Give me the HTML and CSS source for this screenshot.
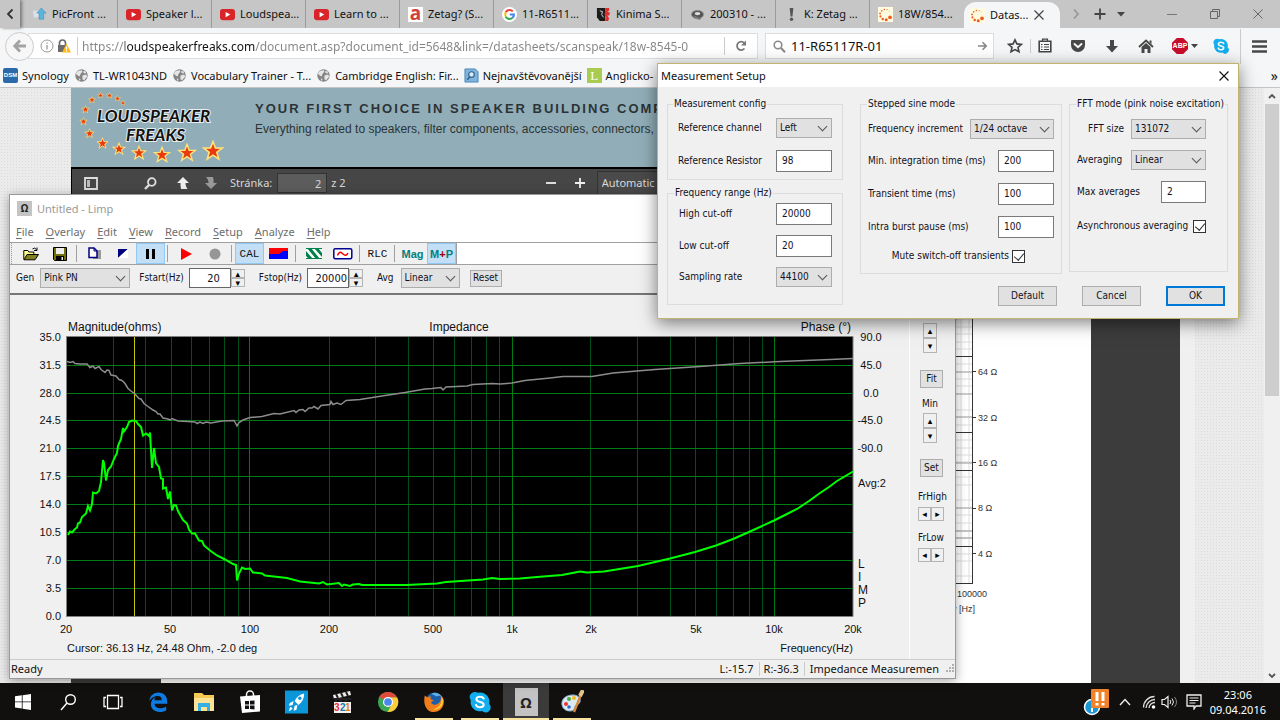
FILE: index.html
```html
<!DOCTYPE html>
<html lang="en">
<head>
<meta charset="utf-8">
<title>Desktop</title>
<link rel="stylesheet" href="styles.css">
</head>
<body>
<svg class="defs" aria-hidden="true">
  <symbol id="star" viewBox="-11 -11 22 22"><path d="M0-9.5 2.4-3.1 9.2-2.9 3.8 1.3 5.8 8 0 4.1-5.8 8-3.8 1.3-9.2-2.9-2.4-3.1Z" fill="#e83a0c" stroke="#ffe27a" stroke-width="1.6"/></symbol>
  <symbol id="yt" viewBox="0 0 16 16"><rect x="0" y="2" width="16" height="12" rx="3" fill="#d9252a"/><path d="M6 5.2v5.6L11 8Z" fill="#fff"/></symbol>
  <symbol id="globe" viewBox="0 0 16 16"><circle cx="8" cy="8" r="6.6" fill="#858585"/><path d="M3 4c2-2 4-1 5-2l1 2-2 2-1 3-2-1-2-2ZM9 8l4-1 1 2-3 4-2-1ZM10 3l3 1-1 2-2-1ZM5 11l2 1-1 2Z" fill="#e6e6e6"/></symbol>
  <symbol id="ring" viewBox="0 0 16 16"><g fill="#ec5a1c"><circle cx="12.8" cy="11" r="2"/><circle cx="8.8" cy="13.6" r="1.6"/><circle cx="5" cy="12.8" r="1.3"/><circle cx="2.6" cy="10" r="1.1"/><circle cx="2.2" cy="6.8" r="1"/><circle cx="4" cy="4" r=".9"/><circle cx="6.8" cy="2.6" r=".8"/><circle cx="9.8" cy="2.8" r=".7" opacity=".7"/><circle cx="12" cy="4.2" r=".6" opacity=".5"/></g></symbol>
  <symbol id="skype" viewBox="0 0 24 24"><path d="M6.500 1a5.500 5.500 0 0 1 3.300 1A10 10 0 0 1 22 14a5.500 5.500 0 0 1-7.800 7.900A10 10 0 0 1 2 10 5.500 5.500 0 0 1 6.500 1Z" fill="#12aeee"/><path d="M16 8.200C15.300 6.800 13.900 6.300 12 6.300c-2.300 0-3.900 1-3.900 2.700 0 3.900 7.900 1.900 7.900 5.700 0 1.900-1.700 3-4 3-2.200 0-3.800-.8-4.300-2.500" fill="none" stroke="#fff" stroke-width="2.300" stroke-linecap="round"/></symbol>
</svg>

<div class="desktop">
<main class="browser">
  <nav class="tabs" aria-label="Tabs">
    <button class="scroll" aria-label="Previous tabs"><svg width="8" height="12" viewBox="0 0 8 12"><path d="M6.500 1.500 2 6l4.500 4.500" fill="none" stroke="#333" stroke-width="1.800"/></svg></button>
    <button class="tab"><svg class="fav" viewBox="0 0 16 16"><path d="M1 4h7v7H2Z" fill="#d9e2e6"/><path d="M10 1l5 5.500h-2.500V13h-5V6.500H5Z" fill="#5cb3dc" stroke="#3d92bd" stroke-width=".6"/></svg><span>PicFront ...</span></button>
    <button class="tab"><svg class="fav"><use href="#yt"/></svg><span>Speaker l...</span></button>
    <button class="tab"><svg class="fav"><use href="#yt"/></svg><span>Loudspea...</span></button>
    <button class="tab"><svg class="fav"><use href="#yt"/></svg><span>Learn to ...</span></button>
    <button class="tab"><b class="fav azet">a</b><span>Zetag? (S...</span></button>
    <button class="tab"><svg class="fav" viewBox="0 0 16 16"><circle cx="8" cy="8" r="8" fill="#fff"/><g fill="none" stroke-width="2.200"><path d="M11.500 4.700A4.700 4.700 0 0 0 4 5.600" stroke="#ea4335"/><path d="M4 5.600a4.700 4.700 0 0 0 0 4.700" stroke="#fbbc05"/><path d="M4 10.300a4.700 4.700 0 0 0 7.300 1.200" stroke="#34a853"/><path d="M11.300 11.500A4.700 4.700 0 0 0 12.700 8H8.300" stroke="#4285f4"/></g></svg><span>11-R6511...</span></button>
    <button class="tab"><svg class="fav" viewBox="0 0 16 16"><path d="M1 1h9v14H4L1 11Z" fill="#1c1c1c"/><path d="M4 4l3 1-1 3 2 3" stroke="#ddd" fill="none"/><path d="M10 1h4v3l-2 1 3 1-1 3h-2l2 3-1 3h-3l1-4-2-3 1-4Z" fill="#e12c2c"/></svg><span>Kinima S...</span></button>
    <button class="tab"><svg class="fav" viewBox="0 0 16 16"><ellipse cx="8" cy="8" rx="6.500" ry="4.500" fill="#555" stroke="#999"/><ellipse cx="8" cy="7" rx="3" ry="1.800" fill="#ddd"/><path d="M4 10l7 3" stroke="#777" stroke-width="2"/></svg><span>200310 - ...</span></button>
    <button class="tab"><svg class="fav" viewBox="0 0 16 16"><path d="M6 1h4l-1 9H7Z" fill="#555"/><circle cx="8" cy="13" r="1.800" fill="#555"/></svg><span>K: Zetag ...</span></button>
    <button class="tab"><svg class="fav cream"><use href="#ring"/></svg><span>18W/854...</span></button>
    <button class="tab active"><svg class="fav cream"><use href="#ring"/></svg><span>Datas...</span><svg width="10" height="10" viewBox="0 0 10 10"><path d="M.5.5l9 9m0-9-9 9" stroke="#444" stroke-width="1.200"/></svg></button>
    <div class="tabtools">
      <button aria-label="Next tabs"><svg width="8" height="12" viewBox="0 0 8 12"><path d="M2 1.500 6 6l-4 4.500" fill="none" stroke="#999" stroke-width="1.800"/></svg></button>
      <button aria-label="New tab"><svg width="12" height="12" viewBox="0 0 12 12"><path d="M6 .5v11M.5 6h11" stroke="#444" stroke-width="1.800"/></svg></button>
      <button aria-label="List tabs"><svg width="8" height="5" viewBox="0 0 8 5"><path d="M0 0h8L4 4.500Z" fill="#444"/></svg></button>
    </div>
    <div class="wincontrols">
      <button aria-label="Minimize"><svg width="10" height="10" viewBox="0 0 10 10"><path d="M0 5.500h10" stroke="#777"/></svg></button>
      <button aria-label="Restore"><svg width="10" height="10" viewBox="0 0 10 10"><path d="M.5 2.500h7v7h-7ZM2.500 2V.5h7v7H8" fill="none" stroke="#666"/></svg></button>
      <button aria-label="Close"><svg width="10" height="10" viewBox="0 0 10 10"><path d="M.5.5l9 9m0-9-9 9" stroke="#666"/></svg></button>
    </div>
  </nav>

  <div class="navbar">
    <button class="back" aria-label="Back"><svg width="14" height="14" viewBox="0 0 14 14"><path d="M7 1.500 1.800 7 7 12.500M2 7h11" fill="none" stroke="#a3a3a3" stroke-width="2.800"/></svg></button>
    <div class="urlbox">
      <svg width="14" height="14" viewBox="0 0 14 14"><circle cx="7" cy="7" r="6" fill="none" stroke="#999"/><path d="M7 6v4.500M7 3.500v1.300" stroke="#999" stroke-width="1.300"/></svg>
      <svg width="14" height="14" viewBox="0 0 14 14"><path d="M2.500 6V4a3 3 0 0 1 6 0v2" fill="none" stroke="#6b6b6b" stroke-width="1.700"/><path d="M1 6h9v7H1Z" fill="#6b6b6b"/><path d="M9.500 4.500 14 13.500H5Z" fill="#fcb814"/><path d="M9.500 7.500v3M9.500 11.300v1.200" stroke="#fff" stroke-width="1.200"/></svg>
      <input class="url" aria-label="Address" value="https://loudspeakerfreaks.com/document.asp?document_id=5648&amp;link=/datasheets/scanspeak/18w-8545-0">
      <button class="reload" aria-label="Reload"><svg width="12" height="12" viewBox="0 0 12 12"><path d="M9.500 8.500A4.200 4.200 0 1 1 9.300 3" fill="none" stroke="#777" stroke-width="1.700"/><path d="M11 .5V5.500H6Z" fill="#777"/></svg></button>
    </div>
    <div class="searchbox">
      <svg width="13" height="13" viewBox="0 0 13 13"><circle cx="5" cy="5" r="3.800" fill="none" stroke="#8a8a8a" stroke-width="1.600"/><path d="M8 8l4 4.300" stroke="#8a8a8a" stroke-width="2"/></svg>
      <input aria-label="Search" value="11-R65117R-01">
      <svg width="10" height="10" viewBox="0 0 10 10"><path d="M0 5h8M4.500 1.200 8.300 5 4.500 8.800" fill="none" stroke="#888" stroke-width="1.600"/></svg>
    </div>
    <div class="navicons">
      <button aria-label="Bookmark"><svg width="16" height="16" viewBox="0 0 16 16"><path d="M8 1.800l1.900 4.100 4.500.5-3.400 3 1 4.400L8 11.600l-4 2.200 1-4.400-3.400-3 4.500-.5Z" fill="none" stroke="#444" stroke-width="1.600"/></svg></button>
      <button class="ruled" aria-label="Bookmarks list"><svg width="14" height="16" viewBox="0 0 14 16"><path d="M1.200 3.200h11.600v10.600H1.200Z" fill="none" stroke="#444" stroke-width="1.600"/><path d="M4.500 3V1.200h5V3M3 6.500h1.500M6 6.500h5M3 9h1.500M6 9h5M3 11.500h1.500M6 11.500h5" fill="none" stroke="#444" stroke-width="1.200"/></svg></button>
      <button aria-label="Pocket"><svg width="16" height="14" viewBox="0 0 16 14"><path d="M2 1h12a1 1 0 0 1 1 1v4a7 7 0 0 1-14 0V2a1 1 0 0 1 1-1Z" fill="#484848"/><path d="M4.500 5 8 8.300 11.500 5" fill="none" stroke="#f5f6f7" stroke-width="1.900" stroke-linecap="round"/></svg></button>
      <button aria-label="Downloads"><svg width="14" height="14" viewBox="0 0 14 14"><path d="M5 1h4v6h4l-6 6.500L1 7h4Z" fill="#484848"/></svg></button>
      <button aria-label="Home"><svg width="16" height="15" viewBox="0 0 16 15"><path d="M1 8 8 1.500 15 8" fill="none" stroke="#484848" stroke-width="1.800"/><path d="M3.500 8 8 4l4.500 4v6H9.500v-4h-3v4h-3ZM11.500 1.500h2V5l-2-1.800Z" fill="#484848"/></svg></button>
      <button class="abp" aria-label="Adblock Plus"><b>ABP</b><svg width="7" height="4" viewBox="0 0 7 4"><path d="M0 0h7L3.500 4Z" fill="#444"/></svg></button>
      <button aria-label="Skype"><svg width="16" height="16"><use href="#skype"/></svg></button>
      <button class="ruled menu" aria-label="Menu"><svg width="15" height="13" viewBox="0 0 15 13"><path d="M0 1.500h15M0 6.500h15M0 11.500h15" stroke="#484848" stroke-width="2.600"/></svg></button>
    </div>
  </div>

  <nav class="bookmarks" aria-label="Bookmarks">
    <a href="#"><b class="mark dsm">DSM</b>Synology</a>
    <a href="#"><svg class="mark"><use href="#globe"/></svg>TL-WR1043ND</a>
    <a href="#"><svg class="mark"><use href="#globe"/></svg>Vocabulary Trainer - T...</a>
    <a href="#"><svg class="mark"><use href="#globe"/></svg>Cambridge English: Fir...</a>
    <a href="#"><svg class="mark" viewBox="0 0 16 16"><path d="M1 1h11l3 3v11H1Z" fill="#7db4dc" stroke="#4a86b8"/><circle cx="8" cy="7" r="3" fill="#d8ecfa" stroke="#33618a" stroke-width="1.300"/><path d="M6 9.500 3.500 12.500" stroke="#33618a" stroke-width="1.600"/></svg>Nejnavštěvovanější</a>
    <a href="#"><b class="mark lmark">L</b>Anglicko-</a>
    <button class="more" aria-label="More bookmarks">»</button>
  </nav>

  <section class="viewport">
    <article class="site">
      <header class="banner">
        <svg class="logo" viewBox="71 87 164 79">
          <g><use href="#star" x="97" y="91" width="7" height="7"/><use href="#star" x="106" y="91" width="7" height="7"/><use href="#star" x="114" y="94" width="7" height="7"/><use href="#star" x="120" y="99" width="6" height="6"/><use href="#star" x="88" y="95" width="8" height="8"/><use href="#star" x="81" y="104" width="9" height="9"/><use href="#star" x="79" y="116" width="9" height="9"/><use href="#star" x="84" y="127" width="11" height="11"/><use href="#star" x="96" y="136" width="13" height="13"/><use href="#star" x="112" y="141" width="14" height="14"/><use href="#star" x="131" y="144" width="16" height="16"/><use href="#star" x="153" y="145" width="18" height="18"/><use href="#star" x="177" y="142" width="20" height="20"/><use href="#star" x="202" y="139" width="22" height="22"/></g>
          <g class="logotext"><text x="97" y="121">LOUDSPEAKER</text><text x="126" y="140">FREAKS</text></g>
        </svg>
        <div class="slogan"><h1>YOUR FIRST CHOICE IN SPEAKER BUILDING COMP</h1><p>Everything related to speakers, filter components, accessories, connectors, ele</p></div>
      </header>
      <div class="pdfbar">
        <button aria-label="Sidebar"><svg width="14" height="13" viewBox="0 0 14 13"><path d="M1 1h12v11H1Z" fill="none" stroke="#ddd" stroke-width="1.800"/><path d="M3 3h3v7H3Z" fill="#bbb"/></svg></button>
        <button class="find" aria-label="Find"><svg width="13" height="13" viewBox="0 0 13 13"><circle cx="7.800" cy="5" r="3.800" fill="none" stroke="#e0e0e0" stroke-width="1.800"/><path d="M5 8 1 12" stroke="#e0e0e0" stroke-width="2.400"/></svg></button>
        <button class="up" aria-label="Previous page"><svg width="14" height="14" viewBox="0 0 14 14"><path d="M7 1l6 6H9.500c0 3 1 4.500 2 6H5C4.500 11 4.500 9 4.500 7H1Z" fill="#eee"/></svg></button>
        <button class="down" aria-label="Next page"><svg width="14" height="14" viewBox="0 0 14 14"><path d="M7 13 1 7h3.500C4.500 4 3.500 2.500 2 1h7c.7 2 .7 4 .5 6H13Z" fill="#999"/></svg></button>
        <label for="pg">Stránka:</label><input id="pg" value="2"><span>z 2</span>
        <div class="zoomtools"><button aria-label="Zoom out"><svg width="10" height="10" viewBox="0 0 10 10"><path d="M0 5h10" stroke="#eee" stroke-width="1.800"/></svg></button><button aria-label="Zoom in"><svg width="10" height="10" viewBox="0 0 10 10"><path d="M0 5h10M5 0v10" stroke="#eee" stroke-width="1.800"/></svg></button><select aria-label="Zoom"><option>Automatic</option></select></div>
      </div>
      <div class="pdf">
        <svg class="sheet" viewBox="161 197 930 485">
          <path d="M940 318h33M940 326h33M940 333h33M940 341h33M940 348h33M940 363h33M940 378h33M940 385h33M940 409h33M940 424h33M940 439h33M940 447h33M940 454h33M940 461h33M940 476h33M940 484h33M940 499h33M940 514h33M940 522h33M940 530h33M940 537h33M940 553h33M940 560h33M940 575h33M961 318v264M969 318v264" stroke="#ddd" fill="none"/>
          <path d="M940 371h33M940 393h33M940 416h33M940 462h33M940 507h33M940 530h33M940 537h33" stroke="#999" fill="none"/>
          <path d="M940 355.500h33M940 431.500h33M940 469.500h33M940 545.500h33M940 582.500h33M972.500 318v265M973 370.500h3M973 416.500h3M973 461.500h3M973 507.500h3M973 552.500h3" stroke="#333" fill="none"/>
          <g class="sheettext"><text x="978" y="374">64 Ω</text><text x="978" y="420">32 Ω</text><text x="978" y="465">16 Ω</text><text x="978" y="510">8 Ω</text><text x="978" y="556">4 Ω</text><text x="957" y="596">100000</text><text x="975" y="611" text-anchor="end">y [Hz]</text></g>
        </svg>
      </div>
    </article>
    <div class="scrollbar"><svg width="8" height="16" viewBox="0 0 8 16"><path d="M1 10l3-3 3 3" fill="none" stroke="#555" stroke-width="1.800"/></svg><div class="thumb"></div><svg width="8" height="16" viewBox="0 0 8 16"><path d="M1 7l3 3 3-3" fill="none" stroke="#555" stroke-width="1.800"/></svg></div>
  </section>
</main>

<section class="limp" aria-label="Untitled - Limp">
  <header class="limptitle"><b>Ω</b>Untitled - Limp</header>
  <nav class="limpmenu"><button><u>F</u>ile</button><button><u>O</u>verlay</button><button><u>E</u>dit</button><button><u>V</u>iew</button><button><u>R</u>ecord</button><button><u>S</u>etup</button><button><u>A</u>nalyze</button><button><u>H</u>elp</button></nav>
  <div class="toolrow"><div class="tools">
    <i class="grip"></i>
    <button aria-label="Open"><svg width="16" height="14" viewBox="0 0 16 14"><path d="M.8 12.500V3.500h4l1 1.500h5v2.500" fill="#ffff8a" stroke="#000"/><path d="M1 12.800 4 7.500h11.500l-3.500 5.300Z" fill="#808020" stroke="#000"/><path d="M9.500 2q2-2 4 .5M14 .5v3h-3" fill="none" stroke="#000"/></svg></button>
    <button aria-label="Save"><svg width="14" height="14" viewBox="0 0 14 14"><path d="M.5.5h13v13h-12l-1-1Z" fill="#70700c" stroke="#000"/><path d="M3 1h8v6H3Z" fill="#eee"/><path d="M3 9h8v4.500H3Z" fill="#000"/><path d="M8.500 10h1.500v3H8.500Z" fill="#eee"/></svg></button>
    <i class="sep"></i>
    <button aria-label="Copy"><svg width="14" height="13" viewBox="0 0 14 13"><path d="M5 3h8v9H5Z" fill="#999"/><path d="M1 1h5l3 3v6.500H1Z" fill="#fff" stroke="#000080" stroke-width="1.500"/><path d="M6 1v3h3" fill="none" stroke="#000080"/></svg></button>
    <button class="narrow" aria-label="Colors"><svg width="10" height="9" viewBox="0 0 10 9"><path d="M0 0h10L0 9Z" fill="#000080"/><path d="M10 0v9H0Z" fill="#fff"/></svg></button>
    <button class="on" aria-label="Pause"><svg width="10" height="10" viewBox="0 0 10 10"><path d="M1.500 0v10M7.500 0v10" stroke="#000" stroke-width="3"/></svg></button>
    <i class="sep"></i>
    <button aria-label="Play"><svg width="12" height="12" viewBox="0 0 12 12"><path d="M1 0v12l11-6Z" fill="#f00"/></svg></button>
    <button aria-label="Stop"><svg width="12" height="12" viewBox="0 0 12 12"><circle cx="6" cy="6" r="5.500" fill="#969696"/></svg></button>
    <i class="sep"></i>
    <button class="on mono">CAL</button>
    <button aria-label="Overlay"><svg width="19" height="11" viewBox="0 0 19 11"><path d="M0 0h19v11H0Z" fill="#00f"/><path d="M0 0h19v3h-5l-4 3H0Z" fill="#f00"/></svg></button>
    <i class="sep"></i>
    <button aria-label="Stripes"><svg width="16" height="11" viewBox="0 0 16 11"><path d="M0 0h16v11H0Z" fill="#fff"/><path d="M1 0h4l9 11h-4ZM8 0h4l4 5v4ZM0 3l7 8H3L0 8Z" fill="#00804c"/><path d="M0 .5h16M0 10.500h16" stroke="#00804c"/></svg></button>
    <button aria-label="Sine"><svg width="20" height="12" viewBox="0 0 20 12"><rect x=".8" y=".8" width="18" height="10" rx="1.500" fill="#fff" stroke="#000090" stroke-width="1.500"/><path d="M4.500 7.500c2-5 4-3 5.500-1.500s3.500 2 5-1" fill="none" stroke="#f00" stroke-width="1.500"/></svg></button>
    <i class="sep"></i>
    <button class="mono">RLC</button>
    <i class="sep"></i>
    <button class="teal">Mag</button>
    <button class="on teal">M<em>+</em>P</button>
  </div></div>
  <div class="genrow">
    <label for="gen">Gen</label><span class="pick gen"><select id="gen"><option>Pink PN</option></select></span>
    <label for="fs">Fstart(Hz)</label><span class="num"><input id="fs" value="20"><span class="spin"><button aria-label="Up">▴</button><button aria-label="Down">▾</button></span></span>
    <label for="fe">Fstop(Hz)</label><span class="num full"><input id="fe" value="20000"><span class="spin"><button aria-label="Up">▴</button><button aria-label="Down">▾</button></span></span>
    <label for="av">Avg</label><span class="pick avg"><select id="av"><option>Linear</option></select></span>
    <button class="btn">Reset</button>
  </div>
  <div class="work">
    <svg class="chart" viewBox="10 295 899 364">
      <path d="M66.500 336.500h786.500v280H66.500Z" fill="#000" stroke="#808080"/>
      <path d="M113.500 337v279M145.500 337v279M171.500 337v279M191.500 337v279M209.500 337v279M224.500 337v279M238.500 337v279M329.500 337v279M375.500 337v279M408.500 337v279M433.500 337v279M454.500 337v279M471.500 337v279M486.500 337v279M499.500 337v279M590.500 337v279M637.500 337v279M670.500 337v279M695.500 337v279M716.500 337v279M733.500 337v279M749.500 337v279M762.500 337v279" stroke="#00501c" fill="none"/>
      <path d="M249.500 337v279M512.500 337v279M774.500 337v279M67 365.500h786M67 393.500h786M67 420.500h786M67 448.500h786M67 476.500h786M67 504.500h786M67 532.500h786M67 560.500h786M67 588.500h786" stroke="#007a12" fill="none"/>
      <path d="M134.500 337v279" stroke="#c8c800"/>
      <polyline class="phase" points="67,361.500 70,362.500 73,361.500 75,363.500 80,364 87,364 90,367.500 93,366 95,368.500 99,366.500 101,369.500 105,372.500 107,370 109,370.500 111,375 116,376 119,379.500 122,380.500 125,383.500 128,388.500 131,391 135,394 139,398.500 141,399 144,403.500 148,406.500 153,410 156,411.500 158,414 160,414 163,418 168,419 170,420 172,418.500 178,421 188,421.500 195,422 197,423.500 200,422 203,423.500 206,422 211,423 222,421 234,420.500 236,424 237,426 239,422.500 243,420 250,417.500 262,416.500 274,413.500 280,414 294,410.500 296,412.500 299,410 303,409.500 305,411.500 309,408 312,408 314,406.500 318,409 321,405.500 330,404.500 331,401.500 333,404.500 337,403 341,404.500 346,400.500 360,399.500 385,395.500 405,392.500 425,389 432,388.500 441,387.500 443,390 446,387 467,386 473,384.500 492,383.500 500,384 512,383 525,380.500 550,378 563,376.500 592,376.500 613,373 655,369.500 700,366.500 740,363.500 780,361.500 830,359.500 853,358.500"/>
      <polyline class="impedance" points="68,535 70,531.500 72,532.500 75,529 77,527.500 78,523.500 80,522.500 82,517 86,513.500 88,506 90,510.500 92,504 93,492.500 96,493.500 99,491 101,482 103,460 104,463 106,480.500 108,470 111,466.500 114,459 117,453 118,446 121,439 123,428 124,431.500 127,427 129,422 132,420.500 136,421 138,424 141,427 143,435.500 146,433.500 149,436 150,432.500 152,468 154,448 156,463 159,467 161,478.500 163,479 163,488.500 166,487.500 168,499 170,491.500 172,510.500 174,505 176,505.500 178,511 183,520 187,523.500 189,529.500 192,533.500 195,533.500 199,540.500 202,541 204,545.500 210,550.500 217,555.500 225,559.500 233,564 236,565 237,580.500 239,573.500 242,567.500 245,569 250,568.500 253,572.500 262,573.500 265,575.500 287,578 300,581.500 319,583.500 323,582 327,584.500 339,583 342,586 344,584.500 350,586 353,584.500 359,584 362,585 406,585 437,583.500 446,582 483,579.500 492,578 500,579 520,578.500 537,577 562,575 580,571.500 587,572.500 604,571.500 638,566 670,558.500 695,552 716,545.500 733,539 749,532 774,520.500 785,515 797,509 809,501 820,493 829,487 837,481 853,471.500"/>
      <g class="big"><text x="68" y="331">Magnitude(ohms)</text><text x="459" y="331" text-anchor="middle">Impedance</text><text x="851" y="331" text-anchor="end">Phase (°)</text></g>
      <g text-anchor="end"><text x="61" y="341">35.0</text><text x="61" y="369">31.5</text><text x="61" y="397">28.0</text><text x="61" y="424">24.5</text><text x="61" y="452">21.0</text><text x="61" y="480">17.5</text><text x="61" y="508">14.0</text><text x="61" y="536">10.5</text><text x="61" y="564">7.0</text><text x="61" y="592">3.5</text><text x="61" y="620">0.0</text></g>
      <g text-anchor="middle"><text x="66" y="633">20</text><text x="170" y="633">50</text><text x="250" y="633">100</text><text x="329" y="633">200</text><text x="433" y="633">500</text><text x="512" y="633">1k</text><text x="591" y="633">2k</text><text x="696" y="633">5k</text><text x="774" y="633">10k</text><text x="853" y="633">20k</text></g>
      <g text-anchor="middle"><text x="871" y="341">90.0</text><text x="871" y="369">45.0</text><text x="871" y="397">0.0</text><text x="870" y="424">-45.0</text><text x="870" y="452">-90.0</text></g>
      <text x="858" y="487">Avg:2</text>
      <g class="big"><text x="858" y="568">L</text><text x="858" y="581">I</text><text x="858" y="594">M</text><text x="858" y="607">P</text></g>
      <text x="67" y="652">Cursor: 36.13 Hz, 24.48 Ohm, -2.0 deg</text><text x="853" y="652" text-anchor="end">Frequency(Hz)</text>
    </svg>
    <aside class="side">
      <span class="spin v"><button aria-label="Top up">▴</button><button aria-label="Top down">▾</button></span>
      <button class="btn">Fit</button>
      <span class="cap">Min</span>
      <span class="spin v"><button aria-label="Min up">▴</button><button aria-label="Min down">▾</button></span>
      <button class="btn set">Set</button>
      <span class="cap fr">FrHigh</span>
      <span class="spin h"><button aria-label="FrHigh down">◂</button><button aria-label="FrHigh up">▸</button></span>
      <span class="cap fr">FrLow</span>
      <span class="spin h"><button aria-label="FrLow down">◂</button><button aria-label="FrLow up">▸</button></span>
    </aside>
  </div>
  <footer class="status"><span class="ready">Ready</span><span>L:-15.7</span><span>R:-36.3</span><span class="mode">Impedance Measuremen</span><svg width="10" height="10" viewBox="0 0 10 10"><path d="M7 1h2M7 4h2M7 7h2M4 4h2M4 7h2M1 7h2" stroke="#b0b0b0" stroke-width="2"/></svg></footer>
</section>

<form class="dialog" role="dialog" aria-label="Measurement Setup">
  <header><span>Measurement Setup</span><button type="button" aria-label="Close"><svg width="10" height="10" viewBox="0 0 10 10"><path d="M.5.5l9 9m0-9-9 9" stroke="#111" stroke-width="1.100"/></svg></button></header>
  <div class="cols">
    <div class="one">
      <fieldset class="config"><legend>Measurement config</legend>
        <div class="row"><label for="rc">Reference channel</label><span class="pick"><select id="rc"><option>Left</option></select></span></div>
        <div class="row"><label for="rr">Reference Resistor</label><input id="rr" value="98"></div>
      </fieldset>
      <fieldset class="range"><legend>Frequency range (Hz)</legend>
        <div class="row"><label for="hc">High cut-off</label><input id="hc" value="20000"></div>
        <div class="row"><label for="lc">Low cut-off</label><input id="lc" value="20"></div>
        <div class="row"><label for="sr">Sampling rate</label><span class="pick"><select id="sr"><option>44100</option></select></span></div>
      </fieldset>
    </div>
    <div class="rest">
      <div class="pair">
        <fieldset class="two"><legend>Stepped sine mode</legend>
          <div class="row"><label for="fi">Frequency increment</label><span class="pick"><select id="fi"><option>1/24 octave</option></select></span></div>
          <div class="row"><label for="mi">Min. integration time (ms)</label><input id="mi" value="200"></div>
          <div class="row"><label for="tt">Transient time (ms)</label><input id="tt" value="100"></div>
          <div class="row"><label for="ib">Intra burst pause (ms)</label><input id="ib" value="100"></div>
          <label class="check"><span>Mute switch-off transients</span><input type="checkbox" checked></label>
        </fieldset>
        <fieldset class="three"><legend>FFT mode (pink noise excitation)</legend>
          <div class="row"><label class="inset" for="ff">FFT size</label><span class="pick"><select id="ff"><option>131072</option></select></span></div>
          <div class="row"><label for="ag">Averaging</label><span class="pick"><select id="ag"><option>Linear</option></select></span></div>
          <div class="row"><label for="ma">Max averages</label><input id="ma" value="2"></div>
          <label class="check"><span>Asynchronous averaging</span><input type="checkbox" checked></label>
        </fieldset>
      </div>
      <footer><button type="button" class="btn">Default</button><button type="button" class="btn">Cancel</button><button type="button" class="btn ok">OK</button></footer>
    </div>
  </div>
</form>

<footer class="taskbar">
  <button class="sys" aria-label="Start"><svg width="16" height="16" viewBox="0 0 16 16"><path d="M0 2.300 6.800 1.300V7.500H0ZM7.600 1.200 16 0V7.500H7.600ZM0 8.300H6.800V14.600L0 13.600ZM7.600 8.300H16V16L7.600 14.800Z" fill="#fff"/></svg></button>
  <button class="sys" aria-label="Search"><svg width="18" height="18" viewBox="0 0 18 18"><circle cx="11.500" cy="6.500" r="4.800" fill="none" stroke="#fff" stroke-width="1.400"/><path d="M8 10 2 17" stroke="#fff" stroke-width="1.400"/></svg></button>
  <button class="sys" aria-label="Task view"><svg width="20" height="16" viewBox="0 0 20 16"><path d="M4.500 1.500h11v13h-11ZM3 3.500H1v9h2M17 3.500h2v9h-2" fill="none" stroke="#fff" stroke-width="1.300"/></svg></button>
  <button aria-label="Edge"><svg width="20" height="20" viewBox="0 0 24 24"><path d="M1.500 10.500C2.500 4 7 .5 12.500.5 19 .5 23 5 23 11v3H8c0 4 3.500 5.500 7 5.500 3 0 5-.8 6.800-1.800v4.500C20 23.200 17.500 24 14 24 7.500 24 3.500 20 3.500 14.500 3.500 10.500 6 7.500 9 6c-.9 1-1.200 2.500-1.300 4H16.500c0-3.500-1.500-5.300-4.700-5.300C8 4.700 4 6.500 1.500 10.500Z" fill="#0e7be2"/></svg></button>
  <button aria-label="Files"><svg width="22" height="20" viewBox="0 0 22 20"><path d="M1 1h8l2 2h10v16H1Z" fill="#f5ca54"/><path d="M1 6h20v13H1Z" fill="#fbe294"/><path d="M5 11h12v8h-3v-4H8v4H5Z" fill="#35aee4"/></svg></button>
  <button aria-label="Store"><svg width="20" height="24" viewBox="0 0 20 24"><path d="M6.500 8V4.500a3.500 3.500 0 0 1 7 0V8" fill="none" stroke="#fff" stroke-width="1.500"/><path d="M0 6.500 20 5v16.500L2 23Z" fill="#fff"/><path d="M5 11h4v3.500H5ZM10 10.800 14.500 10.500v4H10ZM5 15.500h4V19H5ZM10 15.500h4.500v4L10 19Z" fill="#111"/></svg></button>
  <button aria-label="Rocket"><svg width="23" height="24" viewBox="0 0 24 24"><path d="M0 0h24v24H0Z" fill="#0a96d8"/><path d="M20 3c-5 1-8 4-10 8l4 4c4-3 6-7 6-12ZM9 11l-4 2-1 3 4-1M13 15l-1 5-3 1 1-5M6 17l2 2-4 3 1-4Z" fill="#fff"/><circle cx="15.500" cy="8" r="1.800" fill="#0a96d8"/></svg></button>
  <button aria-label="Media player"><svg width="20" height="24" viewBox="0 0 20 24"><path d="M1 5 18 1l1 4L2 9Z" fill="#eee"/><path d="M4 4l2 4M9 3l2 4M14 2l2 4M2 9h17M5 9l-2 3M10 9l-2 3M15 9l-2 3" stroke="#222" stroke-width="2"/><path d="M2 12h17v11H2Z" fill="#f2f2f2"/><g font-family="Liberation Sans" font-weight="bold" font-size="10"><text x="2" y="21" fill="#d33">3</text><text x="8" y="21" fill="#27a">2</text><text x="13" y="21" fill="#d80">1</text></g></svg></button>
  <button aria-label="Chrome"><svg width="22" height="22" viewBox="0 0 24 24"><circle cx="12" cy="12" r="11" fill="#3aa757"/><path d="M12 12 2.500 6.500A11 11 0 0 1 21.500 6.500L22 7H12Z" fill="#e04a3a"/><path d="M12 7h10a11 11 0 0 1-10.500 16L16.500 14Z" fill="#fbcd38"/><circle cx="12" cy="12" r="5.500" fill="#fff"/><circle cx="12" cy="12" r="4.200" fill="#4a87ee"/></svg></button>
  <button class="run" aria-label="Firefox"><svg width="22" height="24" viewBox="0 0 24 24"><circle cx="12.500" cy="11" r="9.500" fill="#1c5fa8"/><path d="M9 3c4-2 9-1 11 3-2-1-4-1-5 0Z" fill="#5bb4e5"/><path d="M2 5l3 2c1-1 3-1 4-1-2 2 0 4 3 4l-3 2c0 3 4 4 7 2 4-2 4-7 3-10 4 3 5 9 2 14-4 6-13 7-17 1C1 15 1 9 2 5Z" fill="#ef7d1c"/><path d="M20 7c1 7-3 12-10 13 8 2 13-5 12-11Z" fill="#fbc83c"/></svg></button>
  <button class="run" aria-label="Skype"><svg width="22" height="24" viewBox="0 0 24 24"><use href="#skype"/></svg></button>
  <button class="run current" aria-label="Limp"><b class="omega">Ω</b></button>
  <button class="run" aria-label="Paint"><svg width="24" height="24" viewBox="0 0 24 24"><path d="M2 15C1 9 6 5 13 5c5 0 8 3 7 7-1 3-4 2-5 4s0 5-5 5c-4 0-7-2-8-6Z" fill="#dce8f2" stroke="#8fb0cc"/><circle cx="6" cy="14" r="2" fill="#e33"/><circle cx="9" cy="9" r="2" fill="#4a4"/><circle cx="14" cy="8" r="2" fill="#f5b820"/><circle cx="9" cy="17" r="1.800" fill="#36c"/><path d="M22 2 14 22" stroke="#d88a3c" stroke-width="2.400"/><path d="M23 0l-3 6" stroke="#e8c48c" stroke-width="4"/></svg></button>
  <div class="tray">
    <svg width="28" height="28" viewBox="0 0 28 28"><circle cx="9" cy="19" r="7.500" fill="#1b97d5" stroke="#fff" stroke-width="1.500"/><path d="M9 20v4" stroke="#fff" stroke-width="2"/><rect x="8" y="1" width="18" height="19" rx="1" fill="#f0832a"/><path d="M14 4v9M20 4v9M14 15v2.500M20 15v2.500" stroke="#fff" stroke-width="3"/></svg>
    <svg width="12" height="8" viewBox="0 0 12 8"><path d="M1 7l5-5.500L11 7" fill="none" stroke="#eee" stroke-width="1.400"/></svg>
    <svg class="wifi" width="14" height="14" viewBox="0 0 14 14"><path d="M1.500 12.500A11 11 0 0 1 12.500 1.500M4 13A9 9 0 0 1 13 4.500M7 13A6 6 0 0 1 13 7.500" fill="none" stroke="#ddd" stroke-width="1.300"/><circle cx="11.500" cy="12" r="1.800" fill="#fff"/></svg>
    <svg width="17" height="14" viewBox="0 0 17 14"><path d="M1 4.500h2.500L7 1.500v11L3.500 9.500H1Z" fill="none" stroke="#eee" stroke-width="1.200"/><path d="M9 5q1.500 2 0 4M11 3.500q3 3.500 0 7" fill="none" stroke="#eee"/><path d="M13.500 2q4 5 0 10" fill="none" stroke="#888"/></svg>
    <svg width="16" height="16" viewBox="0 0 16 16"><path d="M1 1h14v11h-5l-2 3v-3H1Z" fill="none" stroke="#eee" stroke-width="1.300"/><path d="M3.500 4h9M3.500 6.500h9M3.500 9h6" stroke="#eee" stroke-width="1.200"/></svg>
    <time>23:06<br>09.04.2016</time>
  </div>
</footer>
</div>
</body>
</html>
```
FILE: styles.css
```css
* { box-sizing: border-box; }
body { margin: 0; font: 11px/14px "Noto Sans", "Open Sans", sans-serif; color: #111; }
button, input, select { font: inherit; color: inherit; margin: 0; }
button { border: 0; padding: 0; background: none; display: flex; align-items: center; justify-content: center; }
input { border: 0; padding: 0; min-width: 0; outline: 0; background: none; }
svg { flex: none; display: block; }
.defs { position: absolute; width: 0; height: 0; }
.desktop { position: relative; min-height: 100vh; display: flex; flex-direction: column; overflow: hidden; }
.browser { flex: 1; display: flex; flex-direction: column; background: #f5f6f7; }

/* browser tabs */
.tabs { display: flex; height: 28px; background: #c6c6c6; align-items: stretch; }
.scroll { width: 20px; box-shadow: 2px 0 3px #777; margin-right: 4px; }
.tab { width: 94px; gap: 5px; padding-left: 8px; justify-content: flex-start; border-right: 1px solid #9a9a9a; white-space: nowrap; }
.tab:nth-last-of-type(2) { border-right: 0; }
.fav { width: 15px; height: 15px; }
.cream { background: #fffbe0; }
.azet { background: #fff; color: #d0413c; font: bold 19px/13px "Noto Sans", sans-serif; }
.tab.active { width: 96px; background: #f5f6f7; border: 0; border-radius: 12px 12px 0 0; margin-top: 2px; padding-left: 6px; }
.tab.active > svg:last-child { margin-left: 1px; }
.tabtools { display: flex; gap: 14px; margin-left: 12px; }
.tabtools button:last-child { margin-left: -3px; }
.wincontrols { display: flex; gap: 33px; margin-left: auto; padding-right: 17px; }

/* address row */
.navbar { display: flex; height: 36px; align-items: center; padding-left: 5px; }
.back { width: 29px; height: 29px; border: 1px solid #ccc; border-radius: 50%; background: #f7f7f7; z-index: 1; }
.urlbox { flex: 1; display: flex; align-items: center; gap: 3px; height: 26px; background: #fff; border: 1px solid #ddd; margin-left: -6px; padding-left: 11px; }
.url { flex: 1; height: 18px; margin-left: 3px; padding-left: 4px; border-left: 1px solid #ccc; font-size: 12px; color: transparent; background: linear-gradient(90deg, #858585 47px, #111 47px 177px, #858585 177px); -webkit-background-clip: text; background-clip: text; }
.reload { width: 33px; height: 18px; border-left: 1px solid #ccc; margin-left: 16px; }
.searchbox { width: 229px; height: 26px; display: flex; align-items: center; gap: 5px; margin-left: 7px; padding: 0 5px 0 7px; background: #fff; border: 1px solid #ddd; }
.searchbox input { flex: 1; font-size: 13px; line-height: 18px; }
.navicons { display: flex; gap: 18px; padding-left: 13px; align-items: center; }
.navicons button { min-width: 16px; }
.navicons .ruled { margin-left: -11px; padding-left: 7px; border-left: 1px solid #ccc; height: 14px; }
.navicons .abp { gap: 3px; margin-right: -3px; }
.abp b { width: 16px; height: 16px; clip-path: polygon(30% 0, 70% 0, 100% 30%, 100% 70%, 70% 100%, 30% 100%, 0 70%, 0 30%); background: #c70d2c; color: #fff; font: bold 7px/16px "Liberation Sans", sans-serif; }
.navicons .menu { height: 35px; margin-left: -7px; padding: 0 13px 0 11px; }

.bookmarks { display: flex; align-items: center; height: 23px; padding-left: 3px; gap: 5px; white-space: nowrap; }
.bookmarks a { display: flex; align-items: center; gap: 4px; color: #111; text-decoration: none; }
.mark { width: 15px; height: 15px; text-align: center; }
.dsm { background: #2c69a8; color: #fff; font: bold 6px/15px "Liberation Sans", sans-serif; border-radius: 2px; }
.lmark { background: #a9cc50; color: #fff; font: 13px/15px "Liberation Serif", serif; }
.more { margin-left: auto; padding-right: 2px; font-size: 14px; }

/* page */
.viewport { flex: 1; display: flex; border-top: 1px solid #c4c4c4; background: radial-gradient(#dcdcdc 30%, transparent 32%) 0 0/3px 3px #ebebeb; }
.site { flex: 1; margin: 0 84px 0 71px; display: flex; flex-direction: column; box-shadow: 15px 0 #f0f0f0; }
.banner { display: flex; height: 79px; background: #91aeb8; overflow: hidden; }
.logo { width: 164px; height: 79px; }
.logotext { font: italic bold 17px "Lato", sans-serif; fill: #111; stroke: #e8eef0; stroke-width: 2px; paint-order: stroke; }
.slogan { padding: 13px 0 0 20px; white-space: nowrap; font-family: "Liberation Sans", sans-serif; color: #2c3336; }
.slogan h1 { margin: 0; font-size: 13px; line-height: 16px; letter-spacing: 2px; }
.slogan p { margin: 4px 0 0; font-size: 12px; line-height: 16px; }
.pdfbar { height: 31px; display: flex; align-items: center; padding-left: 12px; border: 1px solid #000; border-top-width: 2px; background: #464646; color: #d8d8d8; }
.pdfbar .find { margin-left: 46px; }
.pdfbar .up { margin-left: 19px; }
.pdfbar .down { margin-left: 14px; }
.pdfbar label { margin-left: 12px; }
.pdfbar input { width: 50px; height: 20px; margin: 0 4px 0 5px; padding-right: 5px; border: 1px solid #333; background: #5c5c5c; text-align: right; }
.zoomtools { display: flex; gap: 19px; margin-left: 200px; align-items: center; }
.zoomtools select { width: 100px; height: 24px; margin-left: -7px; appearance: none; border: 1px solid #333; background: #4a4a4a; padding-left: 4px; }
.pdf { flex: 1; background: #3c3c3c; padding: 0 89px 0 90px; }
.sheet { width: 100%; background: #fff; }
.sheettext { font: 9px "Liberation Sans", sans-serif; fill: #333; }
.scrollbar { width: 16px; background: #f0f0f0; display: flex; flex-direction: column; align-items: center; }
.thumb { width: 14px; flex: 0 0 292px; background: #cdcdcd; margin-bottom: auto; }

/* shared window controls */
.btn { border: 1px solid #adadad; background: #e1e1e1; }
.pick { position: relative; display: flex; }
.pick::after { content: ""; position: absolute; right: 6px; top: 5px; width: 6px; height: 6px; border: solid #555; border-width: 0 1px 1px 0; transform: rotate(45deg); pointer-events: none; }
.pick select { appearance: none; width: 100%; height: 20px; padding: 0 3px; border: 1px solid #adadad; border-radius: 0; background: #e1e1e1; }
.spin { display: flex; flex-direction: column; }
.spin button { border: 1px solid #b4b4b4; background: #f0f0f0; font: 9px/8px "DejaVu Sans", sans-serif; color: #000; overflow: hidden; }

/* Limp window */
.limp { position: absolute; left: 9px; top: 194px; width: 947px; height: 485px; display: flex; flex-direction: column; background: #f0f0f0; border: 1px solid #999; box-shadow: 0 2px 10px rgba(0,0,0,.35); }
.limptitle { height: 27px; display: flex; align-items: center; gap: 5px; padding-left: 7px; background: #fff; color: #999; }
.limptitle b { width: 15px; height: 15px; background: #c4c4c4; color: #222; font-size: 10px; line-height: 14px; text-align: center; }
.limpmenu { display: flex; gap: 12px; height: 20px; padding-left: 6px; background: #fff; color: #6d6d6d; }
.limpmenu u { text-underline-offset: 2px; }
.toolrow { height: 23px; border-top: 1px solid #a0a0a0; border-bottom: 1px solid #a0a0a0; background: #fff; display: flex; }
.tools { display: flex; background: #f0f0f0; border-right: 1px solid #a0a0a0; }
.tools button { width: 29px; }
.tools .narrow { width: 27px; }
.tools .on { background: #c2dff5; border: 1px solid #90c8f6; }
.grip { width: 6px; border-left: 1px dotted #999; margin-left: 1px; margin-right: -1px; }
.sep { width: 1px; background: #a0a0a0; margin: 2px 3px 2px 2px; }
.mono { font: 11px/14px "Liberation Mono", monospace; }
.tools .teal { font: bold 11px/14px "Liberation Sans", sans-serif; color: #008080; }
.teal em { color: #900; font-style: normal; }
.genrow, .side, .dialog { font: 10px/14px "DejaVu Sans Condensed", "DejaVu Sans", sans-serif; color: #112; }
.genrow { height: 30px; display: flex; align-items: center; gap: 5px; padding: 0 0 2px 6px; border-bottom: 2px solid #777; }
.gen { width: 90px; margin: 0 4px 0 1px; }
.avg { width: 59px; margin: 0 5px 0 2px; }
.num { display: flex; margin-right: 9px; }
.num input { width: 42px; height: 20px; border: 1px solid #666; background: #fff; padding-right: 10px; text-align: right; font-size: 11px; }
.num.full input { padding-right: 1px; }
.num .spin button { width: 14px; height: 9px; }
.num .spin { padding-top: 1px; }
.genrow .btn { width: 32px; height: 17px; }
.work { flex: 1; min-height: 0; display: flex; }
.chart { flex: 1; min-width: 0; height: 100%; font: 11px "Liberation Sans", sans-serif; fill: #111; }
.chart .big { font-size: 12px; }
.phase, .impedance { fill: none; stroke: #8c8c8c; stroke-width: 1.5px; }
.impedance { stroke: #0f0; stroke-width: 2px; }
.side { width: 46px; border-left: 1px solid #fff; padding: 28px 0 0 10px; display: flex; flex-direction: column; align-items: flex-start; }
.side .v { margin-left: 3px; }
.v button { width: 14px; height: 15px; }
.side .btn { width: 23px; height: 18px; margin: 17px 0 9px; }
.side .btn.set { margin: 16px 0 13px; }
.cap { margin: 0 0 2px 2px; }
.side .cap.fr { margin: 0 0 3px -2px; }
.side .h { flex-direction: row; margin: 0 0 10px -2px; }
.h button { width: 13px; height: 14px; }
.status { height: 19px; display: flex; align-items: center; border-top: 1px solid #ccc; padding-left: 1px; white-space: nowrap; }
.ready { flex: 1; }
.status span { padding-right: 5px; }
.status span:nth-child(3) { border-left: 1px solid #ccc; padding-left: 4px; }
.status .mode { border-left: 1px solid #ccc; padding: 0 0 0 5px; }
.status svg { margin-left: 6px; }

/* dialog */
.dialog { position: absolute; left: 657px; top: 63px; width: 582px; background: #f0f0f0; border: 1px solid #c2b46e; box-shadow: 0 4px 16px rgba(0,0,0,.5); }
.dialog header { height: 23px; display: flex; align-items: center; justify-content: space-between; padding: 0 9px 0 3px; background: #fff; font: 11px/14px "Noto Sans", sans-serif; color: #111; }
.cols { display: flex; align-items: flex-start; padding: 10px 10px 12px 9px; }
.one { width: 176px; margin-right: 17px; }
.rest { flex: 1; min-width: 0; }
.pair { display: flex; align-items: flex-start; }
fieldset { margin: 0; padding: 0 8px 0 11px; border: 1px solid #dcdcdc; display: flex; flex-direction: column; min-width: 0; }
legend { margin-left: -5px; padding: 0 1px; white-space: nowrap; }
.row { display: flex; align-items: center; justify-content: space-between; white-space: nowrap; }
.dialog .row input { width: 56px; height: 22px; border: 1px solid #7a7a7a; background: #fff; padding: 0 0 2px 5px; }
.one .pick { width: 56px; }
.config { padding: 7px 10px; gap: 12px; margin-bottom: 6px; }
.range { padding: 3px 10px 17px 11px; gap: 10px; }
.two { width: 202px; height: 177px; padding: 8px 7px 0; gap: 11px; margin-right: 7px; }
.two legend, .three legend { margin-left: -1px; }
.two .pick { width: 84px; }
.three { flex: 1; height: 175px; padding: 8px 21px 0 7px; gap: 11px; }
.three .pick { width: 75px; }
.three .row input { width: 45px; }
.three .inset { padding-left: 11px; }
.check { display: flex; align-items: center; justify-content: flex-end; gap: 3px; white-space: nowrap; }
.two .check { padding-right: 29px; }
.three .check { justify-content: space-between; margin: 5px 0 0; }
.check input { appearance: none; width: 13px; height: 13px; border: 1px solid #333; background: #fff; display: grid; place-content: start center; }
.check input::before { content: ""; width: 5px; height: 8px; border: solid #333; border-width: 0 1px 1px 0; transform: rotate(40deg); }
.dialog footer { display: flex; justify-content: flex-end; gap: 25px; padding: 12px 3px 0; }
.dialog footer .btn { width: 59px; height: 20px; }
.dialog footer .ok { border: 2px solid #0078d7; }

/* taskbar */
.taskbar { height: 38px; display: flex; background: #11100f; color: #fff; }
.taskbar > button { width: 46px; }
.taskbar > .sys { width: 45px; }
.taskbar .run { box-shadow: inset 0 -3px #f8e4a0; margin: 0 4px; width: 38px; }
.taskbar .current { background: #3b3b3b; margin: 0; width: 46px; }
.omega { width: 23px; height: 28px; background: #c3c3c3; color: #222; font: bold 15px/28px "Noto Sans", sans-serif; }
.tray { margin-left: auto; display: flex; align-items: center; gap: 8px; padding-right: 14px; }
.tray .wifi { margin-left: 3px; margin-right: -3px; }
.tray time { font-size: 11px; line-height: 15px; text-align: center; }
```
